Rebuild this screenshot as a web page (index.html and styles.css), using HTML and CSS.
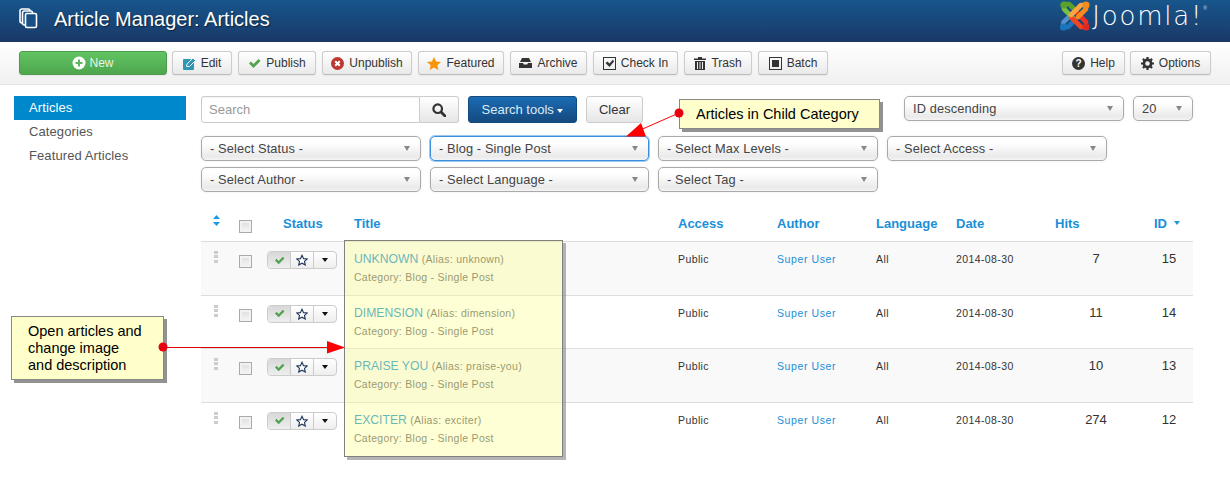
FILE: index.html
```html
<!DOCTYPE html>
<html lang="en">
<head>
<meta charset="utf-8">
<title>Article Manager: Articles</title>
<link rel="stylesheet" href="styles.css">
</head>
<body>
<header class="topbar">
  <svg class="page-icon" width="20" height="21" viewBox="0 0 20 21" fill="none" stroke="#fff" stroke-width="1.6"><rect x="1" y="1" width="10" height="14" rx="2"/><rect x="3.5" y="3" width="10" height="14" rx="2" fill="#174f86"/><rect x="6.5" y="5.5" width="11" height="14" rx="1.5" fill="#174f86"/></svg>
  <h1 class="page-title">Article Manager: Articles</h1>
  <div class="brand">
    <svg width="32" height="32" viewBox="0 0 32 32" fill="none" stroke-width="4.6" stroke-linecap="round" stroke-linejoin="round">
      <path stroke="#5091cd" d="M4 27 L4.5 22 L15 12.5"/>
      <circle cx="4.5" cy="27" r="3.6" fill="#1c75bc"/>
      <path stroke="#1c75bc" d="M5 27 L9 27 L16 20"/>
      <path stroke="#7ac143" d="M5 4 L5 9 L15 19"/>
      <path stroke="#5aa02c" d="M5 4 L10 4 L18 12"/>
      <circle cx="5" cy="5" r="3.6" fill="#5aa02c"/>
      <path stroke="#f44321" d="M27 27 L22 27 L12 17"/>
      <path stroke="#ee3124" d="M27 27 L27 22 L18 13"/>
      <circle cx="27" cy="27" r="3.6" fill="#d92b1f"/>
      <path stroke="#f9a541" d="M27 5 L22 5 L12 15"/>
      <path stroke="#f58a1f" d="M27 5 L27 9 L19 17"/>
      <circle cx="27" cy="5" r="3.6" fill="#f58a1f"/>
    </svg>
    <span class="brand-name">Joomla!</span><span class="brand-reg">®</span>
  </div>
</header>

<nav class="toolbar">
  <button class="btn btn-new">
    <svg class="ico" width="14" height="14" viewBox="0 0 14 14"><circle cx="7" cy="7" r="6.5" fill="#fff"/><path d="M7 3.5v7M3.5 7h7" stroke="#5cb85c" stroke-width="2"/></svg>New
  </button>
  <button class="btn w-edit">
    <svg class="ico" width="13" height="13" viewBox="0 0 13 13"><rect x="0" y="2" width="11" height="11" rx="1" fill="#2f96b4"/><path d="M3.500 9.500L4 7l6-6 2.500 2.500-6 6z" fill="#2f96b4" stroke="#f4f4f4" stroke-width="1"/></svg>Edit
  </button>
  <button class="btn w-publish">
    <svg class="ico" width="13" height="11" viewBox="0 0 13 11"><path d="M1 5.500l2-2 2.500 2.500L10.500 1l2 2-7 7z" fill="#51a351"/></svg>Publish
  </button>
  <button class="btn w-unpublish">
    <svg class="ico" width="13" height="13" viewBox="0 0 13 13"><circle cx="6.500" cy="6.500" r="6.500" fill="#bd362f"/><path d="M4.200 4.200l4.600 4.600M8.800 4.200l-4.600 4.600" stroke="#fff" stroke-width="2"/></svg>Unpublish
  </button>
  <button class="btn w-featured">
    <svg class="ico" width="14" height="13" viewBox="0 0 14 13"><path d="M7 0l2.100 4.500 4.900.5-3.700 3.200 1.100 4.800L7 10.500 2.600 13l1.100-4.800L0 5l4.900-.5z" fill="#f89406"/></svg>Featured
  </button>
  <button class="btn w-archive">
    <svg class="ico" width="13" height="10" viewBox="0 0 13 10"><path d="M3 0h7l2 4H1z" fill="#333"/><path d="M0 5h4l.8 1.500h3.400L9 5h4v5H0z" fill="#333"/></svg>Archive
  </button>
  <button class="btn w-checkin">
    <svg class="ico" width="13" height="13" viewBox="0 0 13 13"><rect x=".5" y=".5" width="12" height="12" fill="none" stroke="#333"/><path d="M2.500 6l2-1.500 2 2L10 2.500l1 2L6.500 10z" fill="#333"/></svg>Check In
  </button>
  <button class="btn w-trash">
    <svg class="ico" width="12" height="13" viewBox="0 0 12 13"><path d="M0 1.500h4V0h4v1.500h4V3H0zM1 4h10v9H1z" fill="#333"/><path d="M3.500 5v7M6 5v7M8.500 5v7" stroke="#eee"/></svg>Trash
  </button>
  <button class="btn w-batch">
    <svg class="ico" width="13" height="13" viewBox="0 0 13 13"><rect x=".5" y=".5" width="12" height="12" fill="none" stroke="#333"/><rect x="3" y="3" width="7" height="7" fill="#333"/></svg>Batch
  </button>
  <span class="spacer"></span>
  <button class="btn w-help">
    <svg class="ico" width="13" height="13" viewBox="0 0 13 13"><circle cx="6.500" cy="6.500" r="6.500" fill="#333"/><text x="6.500" y="10" class="help-mark">?</text></svg>Help
  </button>
  <button class="btn w-options">
    <svg class="ico" width="13" height="13" viewBox="0 0 13 13"><circle cx="6.500" cy="6.500" r="3.600" fill="none" stroke="#333" stroke-width="2.600"/><path d="M6.500 0v13M0 6.500h13M1.900 1.900l9.200 9.200M11.100 1.900l-9.200 9.200" stroke="#333" stroke-width="2.200" stroke-dasharray="2.200 8.600 2.200"/></svg>Options
  </button>
</nav>

<div class="layout">
  <aside class="sidebar">
    <a class="side-link active">Articles</a>
    <a class="side-link">Categories</a>
    <a class="side-link">Featured Articles</a>
  </aside>

  <main class="content">
    <div class="search-row">
      <div class="search-group">
        <span class="search-input">Search</span>
        <span class="search-btn"><svg width="14" height="14" viewBox="0 0 14 14" fill="none" stroke="#333" stroke-width="2.200"><circle cx="5.700" cy="5.700" r="4.300"/><path d="M9 9l4 4" stroke-width="2.800" stroke-linecap="round"/></svg></span>
      </div>
      <span class="tools-btn">Search tools <i class="caret caret-white"></i></span>
      <span class="clear-btn">Clear</span>
      <span class="spacer"></span>
      <span class="select sort-select">ID descending<i class="arrow"></i></span>
      <span class="select limit-select">20<i class="arrow"></i></span>
    </div>

    <div class="filters">
      <span class="select">- Select Status -<i class="arrow"></i></span>
      <span class="select focused">- Blog - Single Post<i class="arrow"></i></span>
      <span class="select">- Select Max Levels -<i class="arrow"></i></span>
      <span class="select">- Select Access -<i class="arrow"></i></span>
      <span class="select">- Select Author -<i class="arrow"></i></span>
      <span class="select">- Select Language -<i class="arrow"></i></span>
      <span class="select">- Select Tag -<i class="arrow"></i></span>
    </div>

    <div class="table">
      <div class="tr head">
        <span class="c-drag"><svg width="7" height="11" viewBox="0 0 7 11" fill="#1a9ae0"><path d="M3.500 0L7 4H0zM0 7h7l-3.500 4z"/></svg></span>
        <span class="c-check"><i class="checkbox"></i></span>
        <span class="c-status">Status</span>
        <span class="c-title">Title</span>
        <span class="c-access">Access</span>
        <span class="c-author">Author</span>
        <span class="c-lang">Language</span>
        <span class="c-date">Date</span>
        <span class="c-hits">Hits</span>
        <span class="c-id">ID <i class="caret caret-blue"></i></span>
      </div>

      <div class="tr row odd">
        <span class="c-drag"><i class="handle"></i></span>
        <span class="c-check"><i class="checkbox"></i></span>
        <span class="c-status"><span class="state"><b class="on"><svg width="11" height="9" viewBox="0 0 13 11"><path d="M1 5.500l2-2 2.500 2.500L10.500 1l2 2-7 7z" fill="#51a351"/></svg></b><b><svg width="12" height="12" viewBox="0 0 14 13"><path d="M7 1l1.800 3.900 4.200.5-3.100 2.800.9 4.100L7 10.200l-3.800 2.100.9-4.100L1 5.400l4.200-.5z" fill="#fff" stroke="#1d3557" stroke-width="1.300"/></svg></b><b><i class="caret caret-dark"></i></b></span></span>
        <span class="c-title"><span class="art-line"><a class="art-name">UNKNOWN</a> <small class="alias">(Alias: unknown)</small></span><small class="art-cat">Category: Blog - Single Post</small></span>
        <span class="c-access cell">Public</span>
        <span class="c-author cell link">Super User</span>
        <span class="c-lang cell">All</span>
        <span class="c-date cell">2014-08-30</span>
        <span class="c-hits num">7</span>
        <span class="c-id num">15</span>
      </div>

      <div class="tr row">
        <span class="c-drag"><i class="handle"></i></span>
        <span class="c-check"><i class="checkbox"></i></span>
        <span class="c-status"><span class="state"><b class="on"><svg width="11" height="9" viewBox="0 0 13 11"><path d="M1 5.500l2-2 2.500 2.500L10.500 1l2 2-7 7z" fill="#51a351"/></svg></b><b><svg width="12" height="12" viewBox="0 0 14 13"><path d="M7 1l1.800 3.900 4.200.5-3.100 2.800.9 4.100L7 10.200l-3.800 2.100.9-4.100L1 5.400l4.200-.5z" fill="#fff" stroke="#1d3557" stroke-width="1.300"/></svg></b><b><i class="caret caret-dark"></i></b></span></span>
        <span class="c-title"><span class="art-line"><a class="art-name">DIMENSION</a> <small class="alias">(Alias: dimension)</small></span><small class="art-cat">Category: Blog - Single Post</small></span>
        <span class="c-access cell">Public</span>
        <span class="c-author cell link">Super User</span>
        <span class="c-lang cell">All</span>
        <span class="c-date cell">2014-08-30</span>
        <span class="c-hits num">11</span>
        <span class="c-id num">14</span>
      </div>

      <div class="tr row odd">
        <span class="c-drag"><i class="handle"></i></span>
        <span class="c-check"><i class="checkbox"></i></span>
        <span class="c-status"><span class="state"><b class="on"><svg width="11" height="9" viewBox="0 0 13 11"><path d="M1 5.500l2-2 2.500 2.500L10.500 1l2 2-7 7z" fill="#51a351"/></svg></b><b><svg width="12" height="12" viewBox="0 0 14 13"><path d="M7 1l1.800 3.900 4.200.5-3.100 2.800.9 4.100L7 10.200l-3.800 2.100.9-4.100L1 5.400l4.200-.5z" fill="#fff" stroke="#1d3557" stroke-width="1.300"/></svg></b><b><i class="caret caret-dark"></i></b></span></span>
        <span class="c-title"><span class="art-line"><a class="art-name">PRAISE YOU</a> <small class="alias">(Alias: praise-you)</small></span><small class="art-cat">Category: Blog - Single Post</small></span>
        <span class="c-access cell">Public</span>
        <span class="c-author cell link">Super User</span>
        <span class="c-lang cell">All</span>
        <span class="c-date cell">2014-08-30</span>
        <span class="c-hits num">10</span>
        <span class="c-id num">13</span>
      </div>

      <div class="tr row">
        <span class="c-drag"><i class="handle"></i></span>
        <span class="c-check"><i class="checkbox"></i></span>
        <span class="c-status"><span class="state"><b class="on"><svg width="11" height="9" viewBox="0 0 13 11"><path d="M1 5.500l2-2 2.500 2.500L10.500 1l2 2-7 7z" fill="#51a351"/></svg></b><b><svg width="12" height="12" viewBox="0 0 14 13"><path d="M7 1l1.800 3.900 4.200.5-3.100 2.800.9 4.100L7 10.200l-3.800 2.100.9-4.100L1 5.400l4.200-.5z" fill="#fff" stroke="#1d3557" stroke-width="1.300"/></svg></b><b><i class="caret caret-dark"></i></b></span></span>
        <span class="c-title"><span class="art-line"><a class="art-name">EXCITER</a> <small class="alias">(Alias: exciter)</small></span><small class="art-cat">Category: Blog - Single Post</small></span>
        <span class="c-access cell">Public</span>
        <span class="c-author cell link">Super User</span>
        <span class="c-lang cell">All</span>
        <span class="c-date cell">2014-08-30</span>
        <span class="c-hits num">274</span>
        <span class="c-id num">12</span>
      </div>
    </div>
  </main>
</div>

<div class="note-highlight"></div>
<div class="note note-child">Articles in Child Category</div>
<div class="note note-open">Open articles and<br>change image<br>and description</div>
<svg class="arrows" width="1230" height="489" viewBox="0 0 1230 489">
  <path d="M679 113L638 131" stroke="#f00" stroke-width="1"/>
  <path d="M626 136.500L641 123L646 136.500z" fill="#f00"/>
  <circle cx="679" cy="113" r="4.500" fill="#e8000f"/>
  <path d="M163 347.500H330" stroke="#e00000" stroke-width="1"/>
  <path d="M327 341L345 347.500L327 353.500z" fill="#f00"/>
  <circle cx="163" cy="347" r="4.500" fill="#e8000f"/>
</svg>
</body>
</html>
```
FILE: styles.css
```css
* { box-sizing: border-box; }
html, body { margin: 0; padding: 0; }
body {
  width: 1230px;
  height: 489px;
  position: relative;
  overflow: hidden;
  background: #fff;
  font-family: "Liberation Sans", Arial, sans-serif;
  font-size: 12px;
  color: #333;
}
i, b { font-style: normal; font-weight: normal; }

/* Top bar */
.topbar {
  height: 42px;
  display: flex;
  align-items: center;
  background: linear-gradient(#17568c, #1a3867);
  padding-left: 19px;
}
.page-icon { flex: none; margin-top: -5px; }
.page-title {
  margin: 0 0 4px 15px;
  font-size: 20px;
  font-weight: normal;
  color: #fff;
  text-shadow: 1px 1px 1px rgba(0,0,0,.5);
}
.brand {
  margin-left: auto;
  margin-right: 23px;
  display: flex;
  align-items: flex-start;
  height: 42px;
}
.brand-name {
  font-family: "DejaVu Sans", sans-serif;
  font-weight: 200;
  font-size: 26px;
  letter-spacing: 1.800px;
  line-height: 33px;
  color: #fff;
  margin-left: 1px;
}
.brand-reg { font-size: 5px; color: #ddd; line-height: 12px; margin-top: 2px; }

/* Toolbar */
.toolbar {
  height: 43px;
  display: flex;
  gap: 6px;
  padding: 9px 19px 0;
  background: linear-gradient(#fff, #f0f0f0);
  border-bottom: 1px solid #e4e4e4;
}
.spacer { flex: 1; }
.btn {
  height: 24px;
  padding: 0;
  display: flex;
  align-items: center;
  justify-content: center;
  gap: 5px;
  font: 12px "Liberation Sans", Arial, sans-serif;
  color: #333;
  border: 1px solid #ccc;
  border-bottom-color: #bbb;
  border-radius: 3px;
  background: linear-gradient(#fff, #e9e9e9);
  box-shadow: 0 1px 2px rgba(0,0,0,.05);
}
.ico { flex: none; }
.btn-new {
  width: 148px;
  color: #e8f5e8;
  background: linear-gradient(#62c462, #4ea64e);
  border-color: #4d9a4d;
  margin-right: -1px;
  gap: 3px;
}
.w-edit { width: 60px; }
.w-publish { width: 78px; }
.w-unpublish { width: 90px; }
.w-featured { width: 86px; }
.w-archive { width: 77px; }
.w-checkin { width: 85px; }
.w-trash { width: 68px; }
.w-batch { width: 70px; }
.w-help { width: 63px; }
.w-options { width: 81px; margin-left: -1px; }
.help-mark { font: bold 10px "Liberation Sans", Arial, sans-serif; fill: #fff; text-anchor: middle; }

/* Layout */
.layout {
  display: flex;
  gap: 15px;
  padding: 11px 37px 0 14px;
}
.sidebar { width: 172px; flex: none; }
.side-link {
  display: block;
  height: 24px;
  line-height: 24px;
  padding-left: 15px;
  font-size: 13px;
  letter-spacing: .1px;
  color: #555;
}
.side-link.active { background: #0088cc; color: #fff; }
.content { flex: 1; min-width: 0; }

/* Search row */
.search-row { display: flex; align-items: flex-start; height: 40px; }
.search-group { display: flex; height: 27px; }
.search-input {
  width: 219px;
  line-height: 25px;
  padding-left: 7px;
  font-size: 13px;
  color: #999;
  border: 1px solid #ccc;
  border-radius: 3px 0 0 3px;
  box-shadow: inset 0 1px 1px rgba(0,0,0,.05);
}
.search-btn {
  width: 39px;
  display: flex;
  align-items: center;
  justify-content: center;
  border: 1px solid #ccc;
  border-left: 0;
  border-radius: 0 3px 3px 0;
  background: linear-gradient(#fff, #e6e6e6);
}
.tools-btn {
  width: 109px;
  height: 27px;
  margin-left: 9px;
  line-height: 25px;
  text-align: center;
  font-size: 13px;
  color: #dcebf7;
  border: 1px solid #124b80;
  border-radius: 3px;
  background: linear-gradient(#1c6cb5, #14497e);
}
.clear-btn {
  width: 57px;
  height: 27px;
  margin-left: 9px;
  line-height: 25px;
  text-align: center;
  font-size: 13px;
  border: 1px solid #ccc;
  border-radius: 3px;
  background: linear-gradient(#fff, #e6e6e6);
}
.caret {
  display: inline-block;
  width: 0;
  height: 0;
  vertical-align: middle;
  border-left: 3.500px solid transparent;
  border-right: 3.500px solid transparent;
  border-top: 4px solid #333;
}
.caret-white { border-top-color: #fff; }
.caret-blue { border-top-color: #1a9ae0; margin-left: 3px; margin-top: -3px; }
.caret-dark { border-top-color: #111; }

/* Selects */
.select {
  position: relative;
  display: block;
  height: 25px;
  line-height: 24px;
  padding-left: 8px;
  font-size: 12.800px;
  letter-spacing: .12px;
  color: #444;
  border: 1px solid #aaa;
  border-radius: 5px;
  background: linear-gradient(#fff 25%, #eaeaea 85%, #f4f4f4);
  box-shadow: 0 0 3px rgba(0,0,0,.08);
}
.select.focused { border: 1px solid #3a8fdd; box-shadow: 0 0 0 1px rgba(58,143,221,.5); }
.arrow {
  position: absolute;
  right: 10px;
  top: 9px;
  width: 0;
  height: 0;
  border-left: 3.500px solid transparent;
  border-right: 3.500px solid transparent;
  border-top: 5px solid #888;
}
.sort-select { width: 220px; }
.limit-select { width: 60px; margin-left: 9px; }
.filters {
  display: grid;
  grid-template-columns: 220px 219px 220px 220px;
  grid-auto-rows: 25px;
  column-gap: 9px;
  row-gap: 6px;
  margin-bottom: 18px;
}

/* Table */
.table { width: 992px; }
.tr {
  display: grid;
  grid-template-columns: 38px 28px 87px 324px 99px 99px 80px 99px 80px 58px;
}
.head {
  height: 31px;
  align-items: center;
  font-size: 13px;
  font-weight: bold;
  color: #1a8fd8;
  padding-bottom: 5px;
}
.row {
  height: 53.500px;
  border-top: 1px solid #ddd;
  padding-top: 8px;
}
.row.odd { background: #f9f9f9; }
.head .c-status { padding-left: 16px; }
.c-drag { padding-left: 13px; }
.head .c-drag { padding-left: 12px; margin-top: -3px; }
.head .c-id { padding-left: 19px; }
.checkbox {
  display: block;
  width: 13px;
  height: 13px;
  border: 1px solid #aaa;
  background: linear-gradient(#ddd, #f6f6f6);
  box-shadow: inset 0 0 0 2px #f2f2f2;
}
.head .checkbox { margin-top: 7px; }
.row .checkbox { margin-top: 5px; }
.handle {
  display: block;
  width: 4px;
  height: 12px;
  margin-top: 1px;
  background: repeating-linear-gradient(#ccc 0 3px, transparent 3px 4.500px);
}
.state {
  display: flex;
  width: 70px;
  height: 18px;
  margin-top: 1px;
  border: 1px solid #ccc;
  border-radius: 4px;
  background: linear-gradient(#fff, #eee);
}
.state b {
  flex: 1;
  display: flex;
  align-items: center;
  justify-content: center;
  border-left: 1px solid #ccc;
}
.state b:first-child { border-left: 0; }
.state .on { background: linear-gradient(#d8d8d8, #eee); border-radius: 3px 0 0 3px; }
.c-title { display: flex; flex-direction: column; }
.art-line { line-height: 18px; white-space: nowrap; }
.art-name { font-size: 12.200px; color: #0088cc; }
.alias { font-size: 10.500px; color: #555; letter-spacing: .3px; }
.art-cat { font-size: 10.500px; line-height: 19px; color: #555; letter-spacing: .28px; }
.cell { font-size: 10.500px; line-height: 18px; letter-spacing: .4px; color: #333; }
.link { color: #1a8fd8; letter-spacing: .6px; }
.num { font-size: 13px; line-height: 18px; color: #333; }
.row .c-hits { text-align: center; padding-left: 2px; }
.row .c-id { text-align: center; padding-left: 10px; }

/* Annotations over the page */
.note-highlight {
  position: absolute;
  left: 344px;
  top: 240px;
  width: 219px;
  height: 217px;
  background: rgba(255,255,153,.4);
  border: 1px solid #808080;
  box-shadow: 3px 3px 0 rgba(120,120,120,.55);
}
.note {
  position: absolute;
  font-size: 14.500px;
  color: #000;
  background: #ffffcc;
  border: 1px solid #888;
  box-shadow: 3px 3px 0 rgba(110,110,110,.75);
}
.note-child {
  left: 679px;
  top: 99px;
  width: 201px;
  height: 30px;
  line-height: 28px;
  padding-left: 16px;
}
.note-open {
  left: 11px;
  top: 316px;
  width: 153px;
  height: 64px;
  line-height: 17px;
  padding: 6px 0 0 16px;
}
.arrows { position: absolute; left: 0; top: 0; pointer-events: none; }
```
